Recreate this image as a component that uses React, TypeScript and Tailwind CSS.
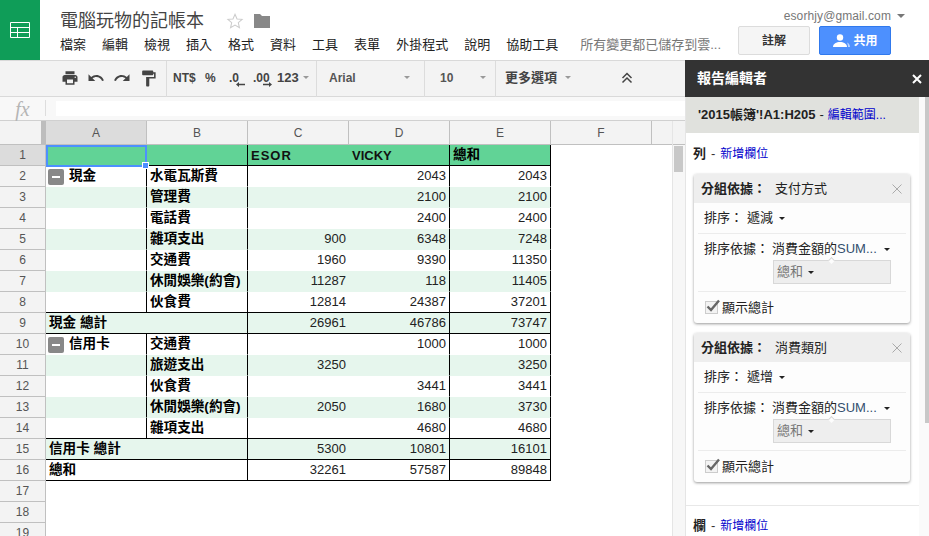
import React from "react";

const MENU = ["檔案","編輯","檢視","插入","格式","資料","工具","表單","外掛程式","說明","協助工具"];

type Row = { a?: string; b?: string; c?: string; d?: string; e?: string; kind?: "item" | "total"; toggle?: boolean; lastBlock?: boolean };
const ROWS: Row[] = [
  { a: "現金", toggle: true, b: "水電瓦斯費", d: "2043", e: "2043" },
  { b: "管理費", d: "2100", e: "2100" },
  { b: "電話費", d: "2400", e: "2400" },
  { b: "雜項支出", c: "900", d: "6348", e: "7248" },
  { b: "交通費", c: "1960", d: "9390", e: "11350" },
  { b: "休閒娛樂(約會)", c: "11287", d: "118", e: "11405" },
  { b: "伙食費", c: "12814", d: "24387", e: "37201", lastBlock: true },
  { a: "現金 總計", kind: "total", c: "26961", d: "46786", e: "73747" },
  { a: "信用卡", toggle: true, b: "交通費", d: "1000", e: "1000" },
  { b: "旅遊支出", c: "3250", e: "3250" },
  { b: "伙食費", d: "3441", e: "3441" },
  { b: "休閒娛樂(約會)", c: "2050", d: "1680", e: "3730" },
  { b: "雜項支出", d: "4680", e: "4680", lastBlock: true },
  { a: "信用卡 總計", kind: "total", c: "5300", d: "10801", e: "16101" },
  { a: "總和", kind: "total", c: "32261", d: "57587", e: "89848" },
];

function Icon({ d, className }: { d: string; className?: string }) {
  return (
    <svg viewBox="0 0 24 24" className={className} fill="currentColor">
      <path d={d} />
    </svg>
  );
}

function Caret({ className }: { className: string }) {
  return <span className={"inline-block w-0 h-0 border-x-[3px] border-x-transparent border-t-[3px] " + className} />;
}

function Sep() {
  return <div className="w-px h-[36px] bg-[#dcdcdc] shrink-0" />;
}

function RowHead({ n, active }: { n: number; active?: boolean }) {
  return (
    <div className={"w-[46px] h-[21px] shrink-0 border-r border-b border-[#c0c0c0] flex items-center justify-center text-[12px] text-[#555] " + (active ? "bg-[#dcdcdc]" : "bg-[#f3f3f3]")}>
      {n}
    </div>
  );
}

function Toggle() {
  return (
    <span className="w-[16px] h-[16px] rounded-[2px] bg-[#888] flex items-center justify-center shrink-0 mr-[5px]">
      <span className="w-[8px] h-[2px] bg-white" />
    </span>
  );
}

function DataRow({ n, row }: { n: number; row: Row }) {
  const band = n % 2 === 1 ? "bg-[#e6f6ed]" : "bg-white";
  const bottom = row.kind === "total" || row.lastBlock ? "border-b-black" : "border-b-transparent";
  const num = "h-full border-b flex items-center justify-end pr-[3px] text-[13px] text-[#222] " + band + " " + bottom;
  const label = "h-full border-b border-r border-r-black flex items-center font-bold text-[13.6px] text-black whitespace-nowrap pt-[1px] " + band + " " + bottom;
  return (
    <div className="flex h-[21px]">
      <RowHead n={n} />
      {row.kind === "total" ? (
        <div className={"w-[202px] pl-[3px] " + label}>{row.a}</div>
      ) : (
        <>
          <div className={"w-[101px] pl-[2px] " + label}>
            {row.toggle && <Toggle />}
            {row.a}
          </div>
          <div className={"w-[101px] pl-[3px] " + label}>{row.b}</div>
        </>
      )}
      <div className={"w-[101px] " + num}>{row.c}</div>
      <div className={"w-[101px] border-r border-r-black " + num}>{row.d}</div>
      <div className={"w-[101px] border-r border-r-black " + num}>{row.e}</div>
    </div>
  );
}

function Card({ name, order }: { name: string; order: string }) {
  return (
    <div className="mx-[9px] w-[216px] h-[149px] rounded-[3px] bg-[#fdfdfd] shadow-[0_1px_3px_rgba(0,0,0,0.4)] text-[13px] text-[#222] flex flex-col">
      <div className="h-[29px] bg-[#eeeeee] rounded-t-[3px] flex items-center pl-[7px] pr-[8px]">
        <span className="font-bold w-[74px] text-[#222] whitespace-nowrap">分組依據：</span>
        <span>{name}</span>
        <svg viewBox="0 0 10 10" className="w-[10px] h-[10px] ml-auto text-[#aaa]" stroke="currentColor" fill="none">
          <path d="M0.5 0.5 L9.5 9.5 M9.5 0.5 L0.5 9.5" />
        </svg>
      </div>
      <div className="mx-[4px] h-[31px] border-b border-[#ececec] flex items-center pl-[6px]">
        <span className="w-[43px]">排序：</span>
        <span>{order}</span>
        <Caret className="border-t-[#222] ml-[6px] border-x-[2.5px] border-t-[3px]" />
      </div>
      <div className="mx-[4px] h-[58px] border-b border-[#ececec] pl-[6px] pt-[6px] flex flex-col">
        <div className="flex items-center h-[18px] whitespace-nowrap">
          <span className="w-[68px]">排序依據：</span>
          <span>消費金額的<span className="text-[#33506e]">SUM...</span></span>
          <Caret className="border-t-[#222] ml-[7px] border-x-[2.5px] border-t-[3px]" />
        </div>
        <div className="relative ml-[69px] mt-[2px] w-[118px] h-[24px] bg-[#eeeeee] border border-[#d8d8d8] flex items-center pl-[3px] text-[#777]">
          <span className="absolute -top-[3px] left-[55px] w-[5px] h-[5px] rotate-45 bg-[#fdfdfd] border-l border-t border-[#d8d8d8]" />
          總和
          <Caret className="border-t-[#222] ml-[5px] border-x-[2.5px] border-t-[3px]" />
        </div>
      </div>
      <div className="flex-1 flex items-center pl-[11px]">
        <span className="relative w-[13px] h-[13px] bg-[#f3f3f3] border border-[#ccc] mr-[4px] shrink-0">
          <svg viewBox="0 0 16 16" className="absolute -top-[4px] -left-[1px] w-[16px] h-[16px] text-[#666]" fill="none" stroke="currentColor" strokeWidth="2.4">
            <path d="M2.5 8.5 L6 12 L14 2.5" />
          </svg>
        </span>
        顯示總計
      </div>
    </div>
  );
}

const COLS = ["A", "B", "C", "D", "E", "F"];

export default function App() {
  return (
    <div className="w-[929px] h-[536px] overflow-hidden bg-white flex flex-col [font-family:'Liberation_Sans','Noto_Sans_CJK_TC',sans-serif]">
      {/* Header */}
      <header className="h-[60px] flex shrink-0">
        <div className="w-[40px] h-[60px] bg-[#0f9d58] flex items-center justify-center pb-[1px]">
          <svg viewBox="0 0 20 16" className="w-[20px] h-[16px] text-white" fill="none" stroke="currentColor" strokeWidth="1">
            <path d="M0.5 0.5H19.5V15.5H0.5Z M0.5 5.5H19.5 M0.5 10.5H19.5 M7.5 5.5V15.5" />
          </svg>
        </div>
        <div className="pl-[20px] pt-[9px]">
          <div className="flex items-center h-[24px]">
            <span className="text-[18px] leading-[24px] text-[#444] w-[144px] whitespace-nowrap">電腦玩物的記帳本</span>
            <svg viewBox="0 0 24 24" className="w-[18px] h-[18px] ml-[22px] text-[#ccc]" fill="none" stroke="currentColor" strokeWidth="1.4">
              <path d="M12 3l2.7 6.2 6.8.6-5.1 4.5 1.5 6.6L12 17.4l-5.9 3.5 1.5-6.6-5.1-4.5 6.8-.6z" />
            </svg>
            <svg viewBox="0 0 16 14" className="w-[16px] h-[14px] ml-[10px] text-[#888]" fill="currentColor">
              <path d="M0 0h6l2 2h8v12H0z" />
            </svg>
          </div>
          <nav className="flex items-center mt-[3px] text-[13px] leading-[18px] text-[#222] whitespace-nowrap">
            {MENU.map((m) => (
              <span key={m} className="mr-[16px]">{m}</span>
            ))}
            <span className="ml-[6px] w-[142px] text-[#777]">所有變更都已儲存到雲...</span>
          </nav>
        </div>
        <div className="ml-auto w-[191px] pr-[38px] flex flex-col items-end">
          <div className="h-[26px] pt-[6px] flex items-center text-[12px] tracking-[0.1px] text-[#777] whitespace-nowrap -mr-[14px]">
            esorhjy@gmail.com
            <Caret className="border-t-[#777] ml-[6px] border-x-[4px] border-t-[4px]" />
          </div>
          <div className="flex gap-[9px]">
            <button className="w-[72px] h-[29px] bg-[#f5f5f5] border border-[#dcdcdc] rounded-[2px] text-[12px] font-bold text-[#333]">註解</button>
            <button className="w-[72px] h-[29px] bg-[#4d90fe] border border-[#3079ed] rounded-[2px] text-[12px] font-bold text-white flex items-center justify-center gap-[3px]">
              <svg viewBox="0 0 18 13" className="w-[18px] h-[13px]" fill="currentColor">
                <circle cx="8" cy="3.5" r="3.2" />
                <path d="M1 13c0-3.4 3.5-5 7-5s7 1.6 7 5z" />
                <path d="M15 8.4c1.4.6 3 1.8 3 4.6h-2c0-1.9-.4-3.4-1-4.6z" opacity="0.6" />
              </svg>
              共用
            </button>
          </div>
        </div>
      </header>

      <div className="flex flex-1 min-h-0">
        {/* Left side */}
        <div className="w-[685px] shrink-0 flex flex-col">
          <div className="h-[37px] bg-[#f3f3f3] border-y border-[#d9d9d9] flex items-center text-[#444] shrink-0">
            <div className="w-[166px] flex items-center pl-[61px] gap-[8px] text-[#444] pb-[1px]">
              <Icon className="w-[18px] h-[18px]" d="M19 8H5c-1.66 0-3 1.34-3 3v6h4v4h12v-4h4v-6c0-1.66-1.34-3-3-3zm-3 11H8v-5h8v5zm3-7c-.55 0-1-.45-1-1s.45-1 1-1 1 .45 1 1-.45 1-1 1zm-1-9H6v4h12V3z" />
              <Icon className="w-[18px] h-[18px]" d="M12.5 8c-2.65 0-5.05.99-6.9 2.6L2 7v9h9l-3.62-3.62c1.39-1.16 3.16-1.88 5.12-1.88 3.54 0 6.55 2.31 7.6 5.5l2.37-.78C21.08 11.03 17.15 8 12.5 8z" />
              <Icon className="w-[18px] h-[18px]" d="M18.4 10.6C16.55 8.99 14.15 8 11.5 8c-4.65 0-8.58 3.03-9.96 7.22L3.9 16c1.05-3.19 4.05-5.5 7.6-5.5 1.95 0 3.73.72 5.12 1.88L13 16h9V7l-3.6 3.6z" />
              <Icon className="w-[19px] h-[19px]" d="M18 4V3c0-.55-.45-1-1-1H5c-.55 0-1 .45-1 1v4c0 .55.45 1 1 1h12c.55 0 1-.45 1-1V6h1v4H9v11c0 .55.45 1 1 1h2c.55 0 1-.45 1-1v-9h8V4h-3z" />
            </div>
            <Sep />
            <div className="w-[149px] flex items-center text-[12px] font-bold text-[#444] pl-[6px] pb-[2px] whitespace-nowrap">
              <span className="w-[32px]">NT$</span>
              <span className="w-[24px]">%</span>
              <span className="relative w-[24px]">
                .0
                <svg viewBox="0 0 9 5" className="absolute left-[7px] top-[13px] w-[9px] h-[5px] text-[#444]" fill="currentColor">
                  <path d="M0 2.5 L3 0 V1.7 H9 V3.3 H3 V5 Z" />
                </svg>
              </span>
              <span className="relative w-[24px]">
                .00
                <svg viewBox="0 0 9 5" className="absolute left-[10px] top-[13px] w-[9px] h-[5px] text-[#444]" fill="currentColor">
                  <path d="M9 2.5 L6 0 V1.7 H0 V3.3 H6 V5 Z" />
                </svg>
              </span>
              <span className="text-[13px]">123</span>
              <Caret className="border-t-[#999] ml-[4px]" />
            </div>
            <Sep />
            <div className="w-[107px] flex items-center pl-[12px] pr-[14px] pb-[2px] text-[12px] font-bold text-[#555]">
              Arial
              <Caret className="border-t-[#999] ml-auto" />
            </div>
            <Sep />
            <div className="w-[70px] flex items-center pl-[15px] pr-[9px] pb-[2px] text-[12px] font-bold text-[#555]">
              10
              <Caret className="border-t-[#999] ml-auto" />
            </div>
            <Sep />
            <div className="flex items-center pl-[9px] pb-[2px] text-[13px] font-bold text-[#444] whitespace-nowrap">
              更多選項
              <Caret className="border-t-[#999] ml-[8px]" />
            </div>
            <svg viewBox="0 0 12 12" className="w-[12px] h-[12px] ml-[50px] mb-[2px] text-[#444]" fill="none" stroke="currentColor" strokeWidth="1.5">
              <path d="M1.5 6 L6 1.5 L10.5 6 M1.5 10.5 L6 6 L10.5 10.5" />
            </svg>
          </div>

          <div className="h-[24px] bg-[#f8f8f8] border-b border-[#d0d0d0] flex items-center shrink-0">
            <div className="w-[46px] h-full flex items-center justify-center relative">
              <span className="[font-family:'Liberation_Serif',serif] italic text-[20px] leading-[20px] text-[#b5b5b5] pr-[1px]">fx</span>
              <span className="absolute right-0 top-[3px] h-[16px] w-px bg-[#ddd]" />
            </div>
            <div className="ml-[10px] flex-1 h-[15px] bg-white" />
          </div>

          <div className="flex flex-1 min-h-0">
            <div className="w-[672px] shrink-0 overflow-hidden relative">
              <div className="flex h-[24px] border-b border-[#c0c0c0]">
                <div className="w-[46px] h-full bg-[#f3f3f3] border-r-[5px] border-[#bdbdbd]" />
                {COLS.map((c, i) => (
                  <div key={c} className={"w-[101px] h-full border-r border-[#c0c0c0] flex items-center justify-center text-[12px] text-[#555] " + (i === 0 ? "bg-[#dcdcdc]" : "bg-[#f3f3f3]")}>
                    {c}
                  </div>
                ))}
                <div className="flex-1 h-full bg-[#f3f3f3]" />
              </div>

              <div className="flex h-[21px]">
                <RowHead n={1} active />
                <div className="w-[101px] h-full bg-[#61d396] border-b border-b-black" />
                <div className="w-[101px] h-full bg-[#61d396] border-b border-r border-black" />
                <div className="w-[101px] h-full bg-[#61d396] border-b border-b-black flex items-center pl-[3px] pt-[1px] text-[13px] font-bold text-[#111] tracking-[1px]">ESOR</div>
                <div className="w-[101px] h-full bg-[#61d396] border-b border-r border-black flex items-center pl-[3px] pt-[1px] text-[13px] font-bold text-[#111]">VICKY</div>
                <div className="w-[101px] h-full bg-[#61d396] border-b border-r border-black flex items-center pl-[3px] pt-[1px] text-[13.6px] font-bold text-black">總和</div>
              </div>

              {ROWS.map((r, i) => (
                <DataRow key={i} n={i + 2} row={r} />
              ))}
              {[17, 18, 19].map((n) => (
                <div key={n} className="flex h-[21px]">
                  <RowHead n={n} />
                </div>
              ))}

              <div className="absolute left-[46px] top-[24px] w-[101px] h-[22px] border-2 border-[#4d90fe] pointer-events-none" />
              <div className="absolute left-[142px] top-[41px] w-[7px] h-[7px] bg-[#4d90fe] border border-white" />
            </div>
            <div className="w-[13px] shrink-0 bg-[#f7f7f7] border-l border-[#e5e5e5]">
              <div className="h-[24px] bg-[#f3f3f3] border-b border-[#c0c0c0]" />
              <div className="ml-[1px] mt-[1px] w-[9px] h-[26px] bg-[#c8c8c8]" />
            </div>
          </div>
        </div>

        {/* Report editor */}
        <aside className="flex-1 flex flex-col min-w-0">
          <div className="h-[37px] bg-[#333333] flex items-center pl-[12px] pr-[7px] text-white shrink-0">
            <span className="text-[14px] font-bold">報告編輯者</span>
            <svg viewBox="0 0 10 10" className="w-[10px] h-[10px] ml-auto" fill="none" stroke="currentColor" strokeWidth="2">
              <path d="M1 1 L9 9 M9 1 L1 9" />
            </svg>
          </div>
          <div className="flex flex-1 min-h-0 overflow-hidden border-l border-[#e5e5e5]">
            <div className="w-[233px] shrink-0 text-[13px]">
              <div className="h-[36px] bg-[#e0e1dd] flex items-center pl-[12px] whitespace-nowrap text-[#222]">
                <span className="font-bold">'2015帳簿'!A1:H205</span>
                <span className="ml-[4px] mr-[4px]">-</span>
                <span className="text-[#0000cc] text-[12px]">編輯範圍...</span>
              </div>
              <div className="h-[41px] flex items-center pl-[7px]">
                <span className="font-bold text-[#222]">列</span>
                <span className="mx-[5px] text-[#333]">-</span>
                <span className="text-[#0000cc] text-[12px]">新增欄位</span>
              </div>
              <div className="-ml-px flex flex-col gap-[10px]">
                <Card name="支付方式" order="遞減" />
                <Card name="消費類別" order="遞增" />
              </div>
              <div className="mt-[23px] border-t border-[#e8e8e8] h-[40px] flex items-center pl-[7px]">
                <span className="font-bold text-[#222]">欄</span>
                <span className="mx-[5px] text-[#333]">-</span>
                <span className="text-[#0000cc] text-[12px]">新增欄位</span>
              </div>
            </div>
            <div className="flex-1 flex justify-end bg-[#fafafa]">
              <div className="w-[4px] h-[326px] bg-[#c8c8c8]" />
            </div>
          </div>
        </aside>
      </div>
    </div>
  );
}
